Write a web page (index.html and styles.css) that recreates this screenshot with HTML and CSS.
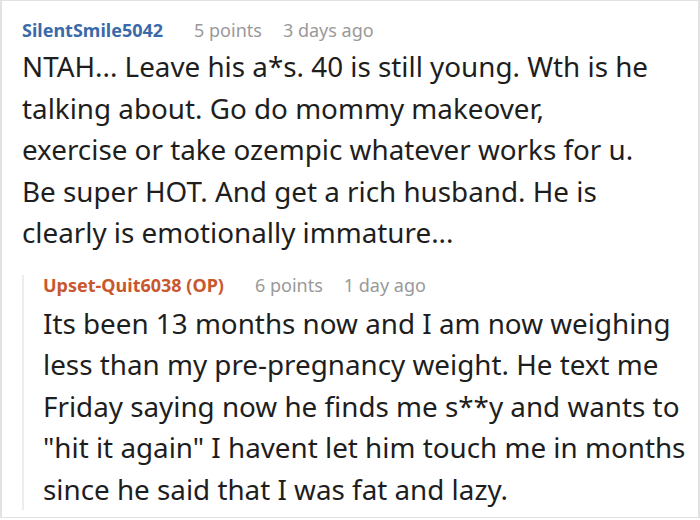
FILE: index.html
```html
<!DOCTYPE html>
<html>
<head>
<meta charset="utf-8">
<link rel="stylesheet" href="styles.css">
</head>
<body>
<div class="frame">
  <div class="comment">
    <div class="meta">
      <span class="author">SilentSmile5042</span>
      <span class="points">5 points</span>
      <span class="time">3 days ago</span>
    </div>
    <p class="text">NTAH... Leave his a*s. 40 is still young. Wth is he<br>talking about. Go do mommy makeover,<br>exercise or take ozempic whatever works for u.<br>Be super HOT. And get a rich husband. He is<br>clearly is emotionally immature...</p>
    <div class="replies">
      <div class="comment reply">
        <div class="meta">
          <span class="author op">Upset-Quit6038 (OP)</span>
          <span class="points">6 points</span>
          <span class="time">1 day ago</span>
        </div>
        <p class="text">Its been 13 months now and I am now weighing<br>less than my pre-pregnancy weight. He text me<br>Friday saying now he finds me s**y and wants to<br>"hit it again" I havent let him touch me in months<br>since he said that I was fat and lazy.</p>
      </div>
    </div>
  </div>
</div>
</body>
</html>
```

FILE: styles.css
```css
html, body {
  margin: 0;
  padding: 0;
  background: #ffffff;
}
.frame {
  box-sizing: border-box;
  width: 700px;
  height: 518px;
  border: 1px solid #e2e2e2;
  border-left-width: 2px;
  border-right-width: 2px;
  padding: 13px 10px 0 20px;
  overflow: hidden;
  font-family: "Noto Sans", sans-serif;
}
.meta {
  display: flex;
  font-size: 18px;
  line-height: 32px;
  color: #999999;
}
.author {
  font-weight: bold;
  color: #3b6aa8;
  margin-right: 31px;
}
.author.op {
  color: #c9572e;
}
.points {
  margin-right: 21px;
}
.text {
  margin: 0;
  font-size: 27.8px;
  line-height: 41.5px;
  color: #1e1e1e;
  white-space: nowrap;
}
.replies {
  margin-top: 21px;
  border-left: 2px solid #ededed;
  padding-left: 19px;
}
.reply .meta {
  line-height: 20px;
  margin-bottom: 8px;
}
```
